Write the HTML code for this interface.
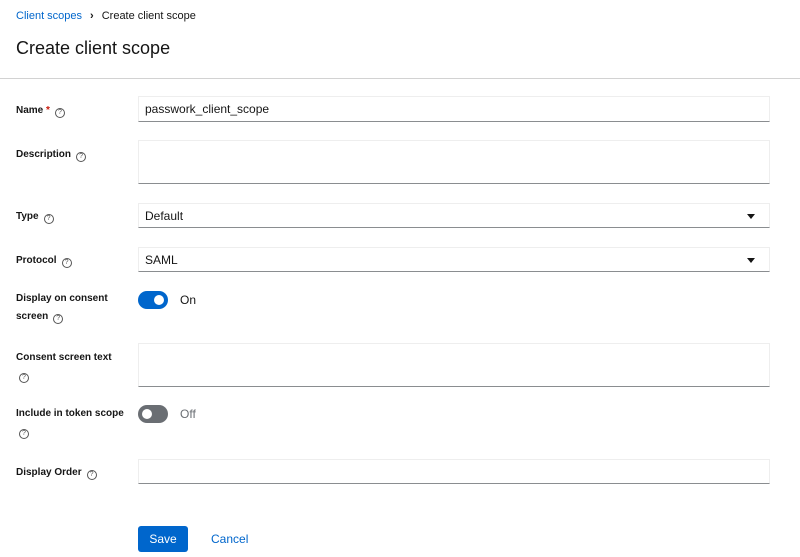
<!DOCTYPE html><html><head><style>
body{margin:0;width:800px;height:557px;background:#fff;font-family:"Liberation Sans",sans-serif;color:#151515;position:relative;overflow:hidden}
.a{position:absolute}
.lbl{position:absolute;left:16px;font-size:10px;font-weight:bold;line-height:18px}
.q{display:inline-block;width:8px;height:8px;border:1px solid #555;border-radius:50%;font-size:7px;line-height:8px;text-align:center;font-weight:normal;margin-left:5px;vertical-align:-1px;color:#555}
.in{position:absolute;left:138px;width:632px;border:1px solid #eee;border-bottom-color:#8a8d90;box-sizing:border-box;font-size:12px;padding-left:6px;line-height:24px}
.caret{position:absolute;right:14px;top:10px;border-left:4px solid transparent;border-right:4px solid transparent;border-top:5px solid #151515}
.tg{position:absolute;left:138px;width:30px;height:18px;border-radius:9px}
.tg i{position:absolute;top:4px;width:10px;height:10px;border-radius:50%;background:#fff}
</style></head><body>
<div class="a" style="left:16px;top:10px;font-size:11px"><span style="color:#06c">Client scopes</span><span style="margin:0 8px;font-weight:bold">›</span>Create client scope</div>
<div class="a" style="left:16px;top:38px;font-size:18px">Create client scope</div>
<div class="a" style="left:0;top:78px;width:800px;height:1px;background:#d2d2d2"></div>
<div class="lbl" style="top:102px">Name <span style="color:#c9190b">*</span><span class="q">?</span></div>
<div class="in" style="top:96px;height:26px">passwork_client_scope</div>
<div class="lbl" style="top:146px">Description<span class="q">?</span></div>
<div class="in" style="top:140px;height:44px"></div>
<div class="lbl" style="top:208px">Type<span class="q">?</span></div>
<div class="in" style="top:203px;height:25px">Default<span class="caret"></span></div>
<div class="lbl" style="top:252px">Protocol<span class="q">?</span></div>
<div class="in" style="top:247px;height:25px">SAML<span class="caret"></span></div>
<div class="lbl" style="top:290px">Display on consent<br>screen<span class="q">?</span></div>
<div class="tg" style="top:291px;background:#06c"><i style="left:16px"></i></div>
<div class="a" style="left:180px;top:293px;font-size:12px">On</div>
<div class="lbl" style="top:349px">Consent screen text<br><span class="q" style="margin-left:3px">?</span></div>
<div class="in" style="top:343px;height:44px"></div>
<div class="lbl" style="top:405px">Include in token scope<br><span class="q" style="margin-left:3px">?</span></div>
<div class="tg" style="top:405px;background:#6a6e73"><i style="left:4px"></i></div>
<div class="a" style="left:180px;top:407px;font-size:12px;color:#6a6e73">Off</div>
<div class="lbl" style="top:464px">Display Order<span class="q">?</span></div>
<div class="in" style="top:459px;height:25px"></div>
<div class="a" style="left:138px;top:526px;width:50px;height:26px;background:#06c;color:#fff;font-size:12px;line-height:26px;text-align:center;border-radius:3px">Save</div>
<div class="a" style="left:211px;top:532px;font-size:12px;color:#06c">Cancel</div>
</body></html>
